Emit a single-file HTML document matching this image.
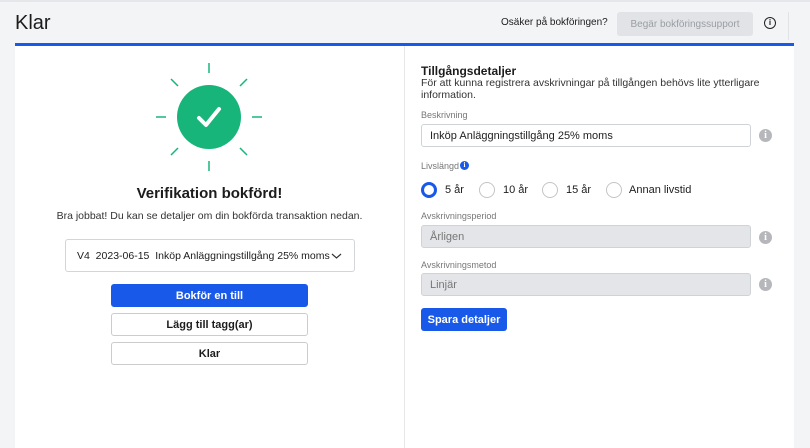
<!DOCTYPE html><html><head><meta charset="utf-8"><style>
*{box-sizing:border-box;margin:0;padding:0}
body{width:810px;height:448px;background:#f3f4f6;font-family:"Liberation Sans",sans-serif;color:#1c1c1c;position:relative;overflow:hidden}
.a{position:absolute;white-space:nowrap}
.lbl{font-size:9px;color:#777}
.inp{position:absolute;left:421px;width:330px;height:23px;border:1px solid #cfd2d6;border-radius:3px;font-size:11px;padding:0 8px;color:#222;display:flex;align-items:center}
.dis{background:#e3e5e8;color:#777}
.gi{position:absolute;width:13px;height:13px;border-radius:50%;background:#b5b7ba;color:#fff;font-size:10px;font-weight:bold;text-align:center;line-height:13px;font-family:"Liberation Serif",serif}
.rad{position:absolute;top:182px;width:16px;height:16px;border-radius:50%;border:1px solid #c4c4c4;background:#fff}
.btn{position:absolute;left:111px;width:197px;height:23px;border:1px solid #ccc;border-radius:3px;background:#fff;font-size:11px;font-weight:bold;display:flex;align-items:center;justify-content:center}
</style></head><body>
<div style="position:absolute;left:0;top:0;width:810px;height:2px;background:#e6e7ea"></div>
<div class="a" style="left:15px;top:12px;font-size:20px">Klar</div>
<div class="a" style="left:501px;top:17px;font-size:10px">Osäker på bokföringen?</div>
<div class="a" style="left:617px;top:12px;width:136px;height:24px;background:#e1e3e6;border-radius:3px;font-size:10px;color:#9a9ea3;display:flex;align-items:center;justify-content:center">Begär bokföringssupport</div>
<div class="a" style="left:764px;top:17px;width:12px;height:12px;border:1.3px solid #222;border-radius:50%;font-size:8px;font-weight:bold;text-align:center;line-height:10px">i</div>
<div style="position:absolute;left:788px;top:12px;width:1px;height:28px;background:#e2e3e6"></div>
<div style="position:absolute;left:15px;top:43px;width:779px;height:3px;background:#1959ea"></div>
<div style="position:absolute;left:15px;top:46px;width:779px;height:402px;background:#fff"></div>
<div style="position:absolute;left:404px;top:46px;width:1px;height:402px;background:#e6e7ea"></div>
<svg class="a" style="left:149px;top:57px" width="120" height="120" viewBox="0 0 120 120">
<g stroke="#18b57a" stroke-width="1.5"><line x1="60" y1="6" x2="60" y2="16"/><line x1="60" y1="104" x2="60" y2="114"/><line x1="7" y1="60" x2="17" y2="60"/><line x1="103" y1="60" x2="113" y2="60"/><line x1="22" y1="22" x2="29" y2="29"/><line x1="98" y1="22" x2="91" y2="29"/><line x1="22" y1="98" x2="29" y2="91"/><line x1="98" y1="98" x2="91" y2="91"/></g>
<circle cx="60" cy="60" r="32" fill="#18b57a"/><path d="M50 61l7 7 13-16" fill="none" stroke="#fff" stroke-width="4" stroke-linecap="round" stroke-linejoin="round"/></svg>
<div class="a" style="left:15px;width:389px;top:185px;text-align:center;font-size:15px;font-weight:bold">Verifikation bokförd!</div>
<div class="a" style="left:15px;width:389px;top:210px;text-align:center;font-size:10.5px;color:#333">Bra jobbat! Du kan se detaljer om din bokförda transaktion nedan.</div>
<div class="a" style="left:65px;top:239px;width:290px;height:33px;border:1px solid #d3d5d8;border-radius:3px;font-size:10.5px;padding:0 11px;display:flex;align-items:center">V4&nbsp;&nbsp;2023-06-15&nbsp;&nbsp;Inköp Anläggningstillgång 25% moms</div>
<svg class="a" style="left:331px;top:252px" width="11" height="8"><path d="M1 2l4.5 4 4.5-4" fill="none" stroke="#333" stroke-width="1.2"/></svg>
<div class="btn" style="top:284px;background:#1959ea;border-color:#1959ea;color:#fff">Bokför en till</div>
<div class="btn" style="top:313px">Lägg till tagg(ar)</div>
<div class="btn" style="top:342px">Klar</div>
<div class="a" style="left:421px;top:64px;font-size:12px;font-weight:bold">Tillgångsdetaljer</div>
<div class="a" style="left:421px;top:77px;font-size:10.5px;line-height:12px;color:#333;white-space:normal;width:360px">För att kunna registrera avskrivningar på tillgången behövs lite ytterligare information.</div>
<div class="a lbl" style="left:421px;top:110px">Beskrivning</div>
<div class="inp" style="top:124px">Inköp Anläggningstillgång 25% moms</div>
<div class="gi" style="left:759px;top:129px">i</div>
<div class="a lbl" style="left:421px;top:161px">Livslängd</div>
<div class="gi" style="left:460px;top:161px;width:9px;height:9px;line-height:9px;font-size:7px;background:#1959ea">i</div>
<div class="rad" style="left:421px;border:3.5px solid #1959ea"></div><div class="a" style="left:445px;top:184px;font-size:11px">5 år</div>
<div class="rad" style="left:479px"></div><div class="a" style="left:503px;top:184px;font-size:11px">10 år</div>
<div class="rad" style="left:542px"></div><div class="a" style="left:566px;top:184px;font-size:11px">15 år</div>
<div class="rad" style="left:606px"></div><div class="a" style="left:629px;top:184px;font-size:11px">Annan livstid</div>
<div class="a lbl" style="left:421px;top:211px">Avskrivningsperiod</div>
<div class="inp dis" style="top:225px">Årligen</div>
<div class="gi" style="left:759px;top:231px">i</div>
<div class="a lbl" style="left:421px;top:260px">Avskrivningsmetod</div>
<div class="inp dis" style="top:273px">Linjär</div>
<div class="gi" style="left:759px;top:278px">i</div>
<div class="a" style="left:421px;top:308px;width:86px;height:23px;background:#1959ea;border-radius:3px;color:#fff;font-size:11px;font-weight:bold;display:flex;align-items:center;justify-content:center">Spara detaljer</div>
</body></html>
